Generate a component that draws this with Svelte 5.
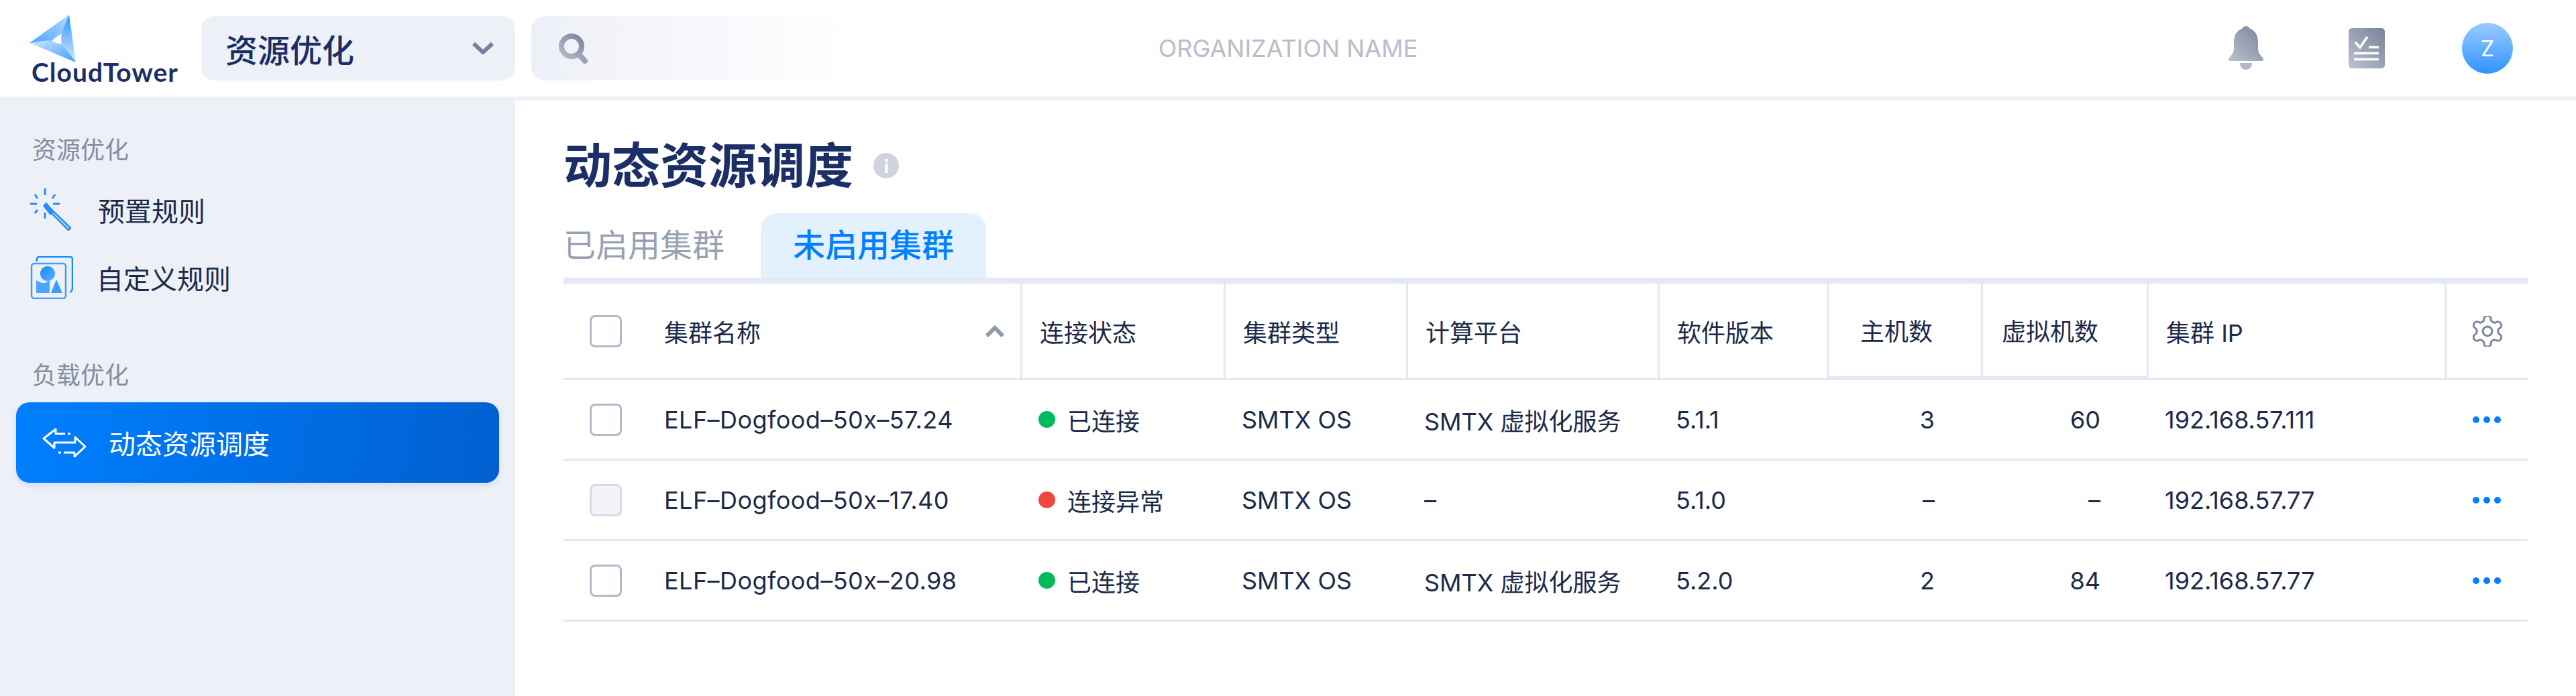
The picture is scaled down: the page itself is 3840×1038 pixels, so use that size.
<script>
  const cols = [
    { key: 'name', label: '集群名称', sort: true },
    { key: 'status', label: '连接状态' },
    { key: 'type', label: '集群类型' },
    { key: 'platform', label: '计算平台' },
    { key: 'version', label: '软件版本' },
    { key: 'hosts', label: '主机数', right: true },
    { key: 'vms', label: '虚拟机数', right: true },
    { key: 'ip', label: '集群 IP' }
  ]

  const rows = [
    { name: 'ELF–Dogfood–50x–57.24', status: '已连接', ok: true, type: 'SMTX OS', platform: 'SMTX 虚拟化服务', version: '5.1.1', hosts: '3', vms: '60', ip: '192.168.57.111' },
    { name: 'ELF–Dogfood–50x–17.40', status: '连接异常', ok: false, type: 'SMTX OS', platform: '–', version: '5.1.0', hosts: '–', vms: '–', ip: '192.168.57.77', disabled: true },
    { name: 'ELF–Dogfood–50x–20.98', status: '已连接', ok: true, type: 'SMTX OS', platform: 'SMTX 虚拟化服务', version: '5.2.0', hosts: '2', vms: '84', ip: '192.168.57.77' }
  ]
</script>

<div class="page">
  <header class="top">
    <div class="left">
      <div class="logo">
        <svg class="mark" width="80" height="76" viewBox="40 16 80 76">
          <defs>
            <linearGradient id="b1" x1="0" y1="1" x2="1" y2="0">
              <stop offset="0" stop-color="#4aa5ff" />
              <stop offset="1" stop-color="#b5d9ff" />
            </linearGradient>
            <linearGradient id="b2" x1="0" y1="0" x2="0" y2="1">
              <stop offset="0" stop-color="#2d94ff" />
              <stop offset="1" stop-color="#d6eaff" />
            </linearGradient>
            <linearGradient id="b3" x1="0" y1="0" x2="1" y2="1">
              <stop offset="0" stop-color="#d2e7ff" />
              <stop offset="1" stop-color="#3d9dff" />
            </linearGradient>
          </defs>
          <path d="M103 18 44 60 50 60C62 57 70 56 77 57 82 52 87 49 92 46 95 37 99 27 103 18Z" fill="url(#b1)" />
          <path d="M103 18 113 89C106 78 99 70 92 62 91 56 91 51 92 46 95 37 99 27 103 18Z" fill="url(#b2)" />
          <path d="M44 60 113 89C106 78 99 70 92 62 87 61 82 59 77 57 70 56 60 58 44 60Z" fill="url(#b3)" />
        </svg>
        <div class="wordmark">CloudTower</div>
      </div>
      <div class="select">
        <span>资源优化</span>
        <svg width="32" height="18" viewBox="0 0 32 18" fill="none" stroke="#76809a" stroke-width="6">
          <path d="M2 2 16 15 30 2" />
        </svg>
      </div>
      <div class="search">
        <svg width="46" height="46" viewBox="0 0 46 46" fill="none" stroke-linecap="round">
          <defs>
            <linearGradient id="sg" x1="1" y1="0" x2="0" y2="1">
              <stop offset="0" stop-color="#7c869d" />
              <stop offset="1" stop-color="#b4bbcb" />
            </linearGradient>
          </defs>
          <circle cx="20" cy="20" r="15" stroke="url(#sg)" stroke-width="8" />
          <path d="M31 32 40 42" stroke="#9aa2b5" stroke-width="8" />
        </svg>
      </div>
    </div>
    <div class="org">ORGANIZATION NAME</div>
    <div class="right">
      <svg width="54" height="66" viewBox="0 0 54 66">
        <defs>
          <linearGradient id="gr" x1="1" y1="0" x2="0" y2="1">
            <stop offset="0" stop-color="#78829a" />
            <stop offset="1" stop-color="#bcc2d0" />
          </linearGradient>
        </defs>
        <path d="M27 0C30 0 32 2 33 4 42 7 45 15 45 24V33C45 40 49 44 52 47 54 49 53 52 50 52H4C1 52 0 49 2 47 5 44 9 40 9 33V24C9 15 12 7 21 4 22 2 24 0 27 0Z" fill="url(#gr)" />
        <path d="M18 55H36C36 61 32 65 27 65 22 65 18 61 18 55Z" fill="#b0b7c7" />
      </svg>
      <svg width="54" height="60" viewBox="0 0 54 60">
        <rect width="54" height="60" rx="5" fill="url(#gr)" />
        <path d="M10 21 17 29 28 13M30 28.500H45M8 37.500H45M8 46.500H45" fill="none" stroke="#fff" stroke-width="3.500" />
      </svg>
      <div class="avatar">Z</div>
    </div>
  </header>

  <div class="body">
    <aside class="side">
      <div class="section">资源优化</div>
      <div class="item first">
        <svg width="64" height="64" viewBox="0 0 64 64" fill="none" stroke="#1f8fff" stroke-width="3">
          <path d="M22 0V10M22 36V45M0 23H10M34 23H44M7 9 11 15M37 9 33 15M7 37 11 32" />
          <path d="M23 24 60 60 57 63 21 27Z" stroke-width="2.500" stroke-linejoin="round" transform="translate(0 -1)" />
          <path d="M21 26 24 23 34 35 30 38Z" fill="#1f8fff" />
        </svg>
        <span>预置规则</span>
      </div>
      <div class="item custom">
        <svg width="64" height="64" viewBox="0 0 64 64" fill="none">
          <defs>
            <linearGradient id="cu" x1="0" y1="0" x2="1" y2="1">
              <stop offset="0" stop-color="#1a8cff" />
              <stop offset="1" stop-color="#59aeff" />
            </linearGradient>
          </defs>
          <path d="M10 8V5C10 2 12 1 14 1H59C62 1 63 3 63 5V48C63 51 61 53 59 54" stroke="#1a8cff" stroke-width="2.500" />
          <rect x="2" y="11" width="51" height="52" rx="4" stroke="#3d9dff" stroke-width="2.500" />
          <circle cx="26" cy="26" r="11" fill="url(#cu)" />
          <path d="M9 36 17 40H22L29 36V55H9Z" fill="#4aa5ff" />
          <path d="M39 35 48 55H31Z" fill="#3d9dff" />
        </svg>
        <span>自定义规则</span>
      </div>
      <div class="section second">负载优化</div>
      <div class="item active">
        <svg width="66" height="44" viewBox="0 0 66 44" fill="none" stroke="#fff" stroke-width="3" stroke-linejoin="round">
          <path d="M42 9H38M34 9H20V2L2 16 18 30V22H49V14L64 28 48 43V37H32M28 37H24" />
        </svg>
        <span>动态资源调度</span>
      </div>
    </aside>

    <main class="main">
      <h1>动态资源调度
        <svg width="38" height="38" viewBox="0 0 38 38">
          <circle cx="19" cy="19" r="19" fill="#ced3df" />
          <rect x="17" y="16" width="4.500" height="14" fill="#fff" />
          <rect x="17" y="9" width="4.500" height="4.500" fill="#fff" />
        </svg>
      </h1>
      <div class="tabs">
        <div class="tab">已启用集群</div>
        <div class="tab on">未启用集群</div>
      </div>

      <div class="table">
        <div class="row head">
          {#each cols as c, i}
            <div class="cell" class:right={c.right} class:first={i === 0}>
              {#if i === 0}<span class="check"></span>{/if}
              <span class="label">{c.label}</span>
              {#if c.sort}
                <svg class="sort" width="28" height="18" viewBox="0 0 28 18" fill="none" stroke="#8f98ab" stroke-width="6">
                  <path d="M2 16 14 4 26 16" />
                </svg>
              {/if}
            </div>
          {/each}
          <div class="cell last">
            <svg width="46" height="46" viewBox="2 2 20 20" fill="none" stroke="#7c869d" stroke-width="1.300">
              <path d="M12.220 2h-.44a2 2 0 0 0-2 2v.18a2 2 0 0 1-1 1.730l-.43.25a2 2 0 0 1-2 0l-.15-.08a2 2 0 0 0-2.730.73l-.22.38a2 2 0 0 0 .73 2.730l.15.1a2 2 0 0 1 1 1.720v.51a2 2 0 0 1-1 1.740l-.15.09a2 2 0 0 0-.73 2.730l.22.38a2 2 0 0 0 2.730.73l.15-.08a2 2 0 0 1 2 0l.43.25a2 2 0 0 1 1 1.730V20a2 2 0 0 0 2 2h.44a2 2 0 0 0 2-2v-.18a2 2 0 0 1 1-1.730l.43-.25a2 2 0 0 1 2 0l.15.08a2 2 0 0 0 2.730-.73l.22-.39a2 2 0 0 0-.73-2.730l-.15-.08a2 2 0 0 1-1-1.740v-.5a2 2 0 0 1 1-1.740l.15-.09a2 2 0 0 0 .73-2.730l-.22-.38a2 2 0 0 0-2.730-.73l-.15.08a2 2 0 0 1-2 0l-.43-.25a2 2 0 0 1-1-1.730V4a2 2 0 0 0-2-2z" />
              <circle cx="12" cy="12" r="3" />
            </svg>
          </div>
        </div>

        {#each rows as r}
          <div class="row data">
            {#each cols as c, i}
              <div class="cell" class:right={c.right} class:first={i === 0}>
                {#if i === 0}<span class="check" class:off={r.disabled}></span>{/if}
                {#if c.key === 'status'}<span class="dot" class:bad={!r.ok}></span>{/if}
                <span class:name={i === 0}>{r[c.key]}</span>
              </div>
            {/each}
            <div class="cell last">
              <span class="more"><i></i><i></i><i></i></span>
            </div>
          </div>
        {/each}
      </div>
    </main>
  </div>
</div>

<style>
  :global(body) {
    margin: 0;
    background: #fff;
    font-family: Inter, "Noto Sans CJK SC", sans-serif;
    color: #1b2a4b;
  }
  .page {
    width: 3840px;
    height: 1038px;
    display: flex;
    flex-direction: column;
    overflow: hidden;
  }
  .top {
    height: 144px;
    border-bottom: 6px solid #edf0f7;
    display: grid;
    grid-template-columns: 1fr auto 1fr;
    align-items: center;
    flex-shrink: 0;
  }
  .left {
    display: flex;
    align-items: center;
    padding-left: 47px;
  }
  .logo {
    width: 253px;
    height: 100px;
    display: flex;
    flex-direction: column;
  }
  .mark { margin-left: -7px; margin-top: -2px; display: block; }
  .wordmark {
    font-family: Lato, sans-serif;
    font-weight: 700;
    font-size: 39px;
    letter-spacing: 1px;
    line-height: 30px;
    margin-top: -4px;
    color: #1b2f66;
  }
  .select {
    width: 468px;
    height: 96px;
    box-sizing: border-box;
    padding: 0 32px 0 36px;
    border-radius: 20px;
    background: #edf0f7;
    display: flex;
    align-items: center;
    justify-content: space-between;
    font-size: 48px;
    font-weight: 500;
    color: #1b2f66;
  }
  .search {
    width: 480px;
    height: 96px;
    margin-left: 24px;
    padding-left: 40px;
    box-sizing: border-box;
    border-radius: 20px;
    background: linear-gradient(90deg, #edf0f7, #fff);
    display: flex;
    align-items: center;
  }
  .org {
    font-size: 36px;
    color: #b6bdcc;
  }
  .right {
    display: flex;
    align-items: center;
    justify-content: flex-end;
    gap: 126px;
    padding-right: 94px;
  }
  .avatar {
    width: 76px;
    height: 76px;
    margin-left: -11px;
    border-radius: 50%;
    background: linear-gradient(180deg, #9ccbff, #2f93ff);
    color: #fff;
    font-size: 32px;
    display: flex;
    align-items: center;
    justify-content: center;
  }
  .body { flex: 1; display: flex; min-height: 0; }
  .side {
    width: 768px;
    flex-shrink: 0;
    background: #edf0f7;
    padding-top: 50px;
    box-sizing: border-box;
  }
  .section {
    height: 48px;
    line-height: 48px;
    padding-left: 48px;
    font-size: 36px;
    color: #848da3;
  }
  .section.second { margin-top: 72px; }
  .item {
    height: 101px;
    padding-left: 45px;
    display: flex;
    align-items: center;
    gap: 37px;
    font-size: 40px;
    color: #1b2a4b;
  }
  .item.first { margin-top: 14px; }
  .item.custom { gap: 35px; }
  .item.active {
    height: 120px;
    width: 720px;
    box-sizing: border-box;
    margin: 16px 0 0 24px;
    padding-left: 39px;
    gap: 33px;
    border-radius: 20px;
    color: #fff;
    background: linear-gradient(100deg, #0080ff, #005fcf);
    box-shadow: 0 4px 10px rgba(0, 80, 180, 0.12);
  }
  .main {
    flex: 1;
    min-width: 0;
    padding: 61px 72px 0;
  }
  h1 {
    margin: 0 0 35px;
    height: 72px;
    display: flex;
    align-items: center;
    gap: 30px;
    font-size: 72px;
    line-height: 72px;
    font-weight: 700;
    color: #1b2f66;
  }
  .tabs {
    display: flex;
    border-bottom: 9px solid #e4e8f4;
  }
  .tab {
    height: 96px;
    line-height: 96px;
    font-size: 48px;
    color: #98a1b3;
    padding-right: 54px;
  }
  .tab.on {
    padding: 0 48px;
    background: #e3f1ff;
    border-radius: 24px 24px 0 0;
    color: #0080ff;
    font-weight: 500;
  }
  .row {
    display: grid;
    grid-template-columns: 684px 303px 272px 375px 252px 230px 247px 444px 121px;
    height: 120px;
    font-size: 36px;
    color: #1b2a4b;
  }
  .row.head { height: 144px; }
  .cell {
    box-sizing: border-box;
    display: flex;
    align-items: center;
    padding-left: 26px;
    border-bottom: 3px solid #e4e8f4;
    white-space: nowrap;
  }
  .data .cell { padding-left: 24px; }
  .head .cell { border-right: 3px solid #e4e8f4; }
  .head .cell.right { border-bottom-width: 6px; }
  .cell.right, .data .cell.right { justify-content: flex-end; padding: 0 72px 0 0; }
  .cell.first, .data .cell.first { padding-left: 39px; gap: 63px; }
  .name { letter-spacing: 0.45px; }
  .head .cell.last { border-right: 0; }
  .cell.last, .data .cell.last { padding: 0 0 0 38px; }
  .sort { margin-left: auto; margin-right: 24px; }
  .check {
    width: 48px;
    height: 48px;
    box-sizing: border-box;
    border: 3px solid #b0b8ca;
    border-radius: 8px;
    flex-shrink: 0;
  }
  .check.off {
    background: #f2f4f9;
    border-color: #d5dae5;
  }
  .dot {
    width: 25px;
    height: 25px;
    border-radius: 50%;
    background: #00ba5d;
    margin-right: 18px;
  }
  .dot.bad { background: #f0483e; }
  .more { display: flex; gap: 6px; padding-left: 1px; }
  .more i {
    width: 10px;
    height: 10px;
    border-radius: 50%;
    background: #0080ff;
  }
</style>
